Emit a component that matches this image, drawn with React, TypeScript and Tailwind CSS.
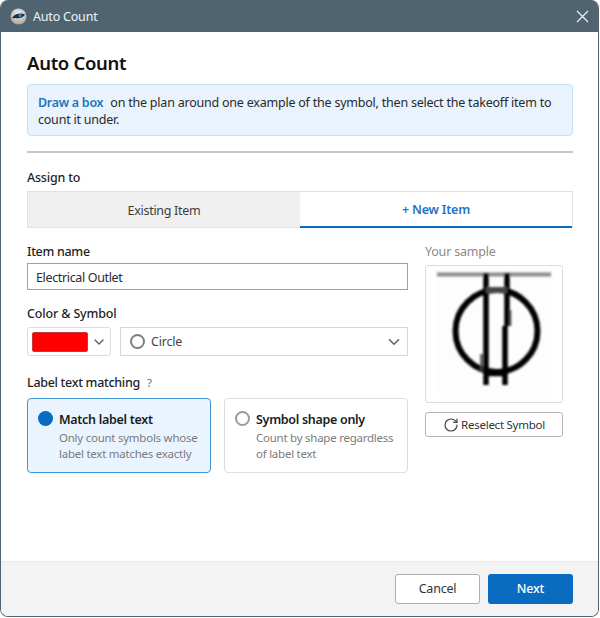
import { ChevronDown, RotateCw } from "lucide-react";

const font = { fontFamily: '"Noto Sans", sans-serif' };

function AppLogo() {
  return (
    <svg width="17" height="17" viewBox="0 0 17 17">
      <defs>
        <radialGradient id="logo-bg" cx="50%" cy="35%" r="65%">
          <stop offset="0%" stopColor="#f4f4f2" />
          <stop offset="100%" stopColor="#a9a59c" />
        </radialGradient>
      </defs>
      <circle cx="8.5" cy="8.5" r="8" fill="url(#logo-bg)" />
      <path d="M2 10 C5 5.5 10 4.5 15 6.5 C13.5 9.5 9 11 5.5 10 C4.500 10 3 10.500 2 10 Z" fill="#1d2f3f" />
      <circle cx="10" cy="7.500" r="1.700" fill="#2f7fc0" />
    </svg>
  );
}

function SampleSymbol() {
  return (
    <svg width="136" height="136" viewBox="0 0 136 136">
      <defs>
        <filter id="soft" x="-10%" y="-10%" width="120%" height="120%">
          <feGaussianBlur stdDeviation="1.200" />
        </filter>
      </defs>
      <rect x="11" y="4" width="115" height="124" fill="#fdfdfd" />
      <g filter="url(#soft)" fill="none" stroke="#000">
        <path d="M11 8.500 H125" stroke="#8c8c8c" strokeWidth="4" />
        <circle cx="70.500" cy="65" r="41" strokeWidth="6" />
        <path d="M60 7 V119" strokeWidth="5.500" />
        <path d="M81 7 V60 M79 60 V119" strokeWidth="5.500" />
        <path d="M60 24 H81" stroke="#444" strokeWidth="6" />
        <path d="M60 108.500 H81" strokeWidth="3.500" />
        <path d="M55.500 88 V105" stroke="#444" strokeWidth="2.500" />
        <path d="M84 44 V60" stroke="#444" strokeWidth="2.500" />
      </g>
    </svg>
  );
}

function OptionCard({ active, title, lines }: { active?: boolean; title: string; lines: string[] }) {
  return (
    <div
      className={
        active
          ? "flex h-[75px] w-[184px] gap-[6px] rounded-[4px] border border-[#3f95d6] bg-[#eaf4fe] pl-[10px] pt-[11px]"
          : "flex h-[75px] w-[184px] gap-[6px] rounded-[4px] border border-[#dedede] bg-white pl-[10px] pt-[11px]"
      }
    >
      {active ? (
        <span className="mt-[1px] h-[15px] w-[15px] shrink-0 rounded-full bg-[#0a6cc0]" />
      ) : (
        <span className="mt-[1px] h-[15px] w-[15px] shrink-0 rounded-full border-2 border-[#9b9b9b] bg-white" />
      )}
      <div>
        <div className="mt-[1px] text-[12.500px] leading-[17px] font-semibold tracking-[-0.3px] text-[#1c1c1c]">{title}</div>
        <div className="mt-[2px] text-[11.500px] leading-[16px] tracking-[-0.25px] whitespace-nowrap text-[#7b7b7b]">
          {lines.map((line) => (
            <div key={line}>{line}</div>
          ))}
        </div>
      </div>
    </div>
  );
}

export default function App() {
  return (
    <div className="h-[618px] w-[600px] bg-white" style={font}>
      <div className="flex h-[617px] w-[599px] flex-col overflow-hidden rounded-[8px] border-x border-b border-[#4f6370] bg-white">
        {/* title bar */}
        <div className="flex h-[32px] shrink-0 items-center justify-between bg-[#4f6370] pl-[9px] pr-[8px] text-white">
          <div className="flex items-center gap-[6px]">
            <AppLogo />
            <span className="pt-[2px] text-[12.500px] tracking-[-0.2px] text-[#f0f3f5]">Auto Count</span>
          </div>
          <svg width="13" height="13" viewBox="0 0 13 13" className="mr-[1px]">
            <path d="M1 1 L12 12 M12 1 L1 12" stroke="#f2f4f5" strokeWidth="1.100" fill="none" />
          </svg>
        </div>

        <div className="flex flex-1 flex-col pl-[26px] pr-[25px]">
          <h1 className="mt-[17px] text-[18.500px] leading-[28px] font-semibold tracking-[-0.3px] text-[#111]">Auto Count</h1>

          <div className="mt-[7px] h-[52px] rounded-[4px] border border-[#c3e0f7] bg-[#e8f3fd] pl-[10px] pt-[9px] text-[12.500px] leading-[17px] tracking-[-0.22px] whitespace-nowrap text-[#2a2a2a]">
            <div>
              <span className="font-semibold tracking-[-0.28px] text-[#1f74bd]">Draw a box</span>
              <span className="ml-[7px]">on the plan around one example of the symbol, then select the takeoff item to</span>
            </div>
            <div>count it under.</div>
          </div>

          <div className="mt-[15px] h-[2px] bg-[#c6c6c6]" />

          <div className="mt-[16px] text-[12.500px] leading-[17px] font-medium tracking-[-0.2px] text-[#1f1f1f]">Assign to</div>

          <div className="mt-[5px] flex h-[37px] border-x border-t border-[#e2e2e2]">
            <div className="flex w-[272px] items-center justify-center border-b border-[#e2e2e2] bg-[#f0f0f0] pt-[3px] text-[12.500px] tracking-[-0.3px] text-[#3c3c3c]">
              Existing Item
            </div>
            <div className="flex flex-1 items-center justify-center border-b-2 border-[#0a6cc0] bg-white pt-[3px] text-[12.500px] font-semibold tracking-[-0.2px] text-[#1f74c9]">
              + New Item
            </div>
          </div>

          <div className="flex">
            {/* left column */}
            <div className="w-[381px]">
              <div className="mt-[15px] text-[12.500px] leading-[17px] font-medium tracking-[-0.3px] text-[#1f1f1f]">Item name</div>
              <div className="mt-[3px] flex h-[27px] items-center border border-[#7aa7e0] bg-white pl-[8px] pt-[3px] text-[12.500px] tracking-[-0.35px] text-[#2a2a2a]">
                Electrical Outlet
              </div>

              <div className="mt-[15px] text-[12.500px] leading-[17px] font-medium tracking-[-0.15px] text-[#1f1f1f]">Color &amp; Symbol</div>
              <div className="mt-[5px] flex h-[29px] gap-[9px]">
                <div className="flex w-[84px] items-center rounded-[3px] border border-[#dcdcdc] bg-white pl-[4px]">
                  <span className="h-[20px] w-[56px] rounded-[2px] border border-[#c9383a] bg-[#ff0000]" />
                  <ChevronDown className="ml-[3px] h-[16px] w-[16px] text-[#666]" strokeWidth={2.200} />
                </div>
                <div className="flex flex-1 items-center border border-[#d6d6d6] bg-white pl-[9px] pr-[4px]">
                  <span className="h-[15px] w-[15px] rounded-full border-2 border-[#7f7f7f]" />
                  <span className="ml-[6px] flex-1 pt-[2px] text-[12.500px] tracking-[-0.2px] text-[#444]">Circle</span>
                  <ChevronDown className="h-[18px] w-[18px] text-[#666]" strokeWidth={2.200} />
                </div>
              </div>

              <div className="mt-[18px] flex items-center text-[12.500px] leading-[17px] font-medium tracking-[-0.3px] text-[#1f1f1f]">
                Label text matching
                <span className="ml-[7px] text-[11px] text-[#777]">?</span>
              </div>
              <div className="mt-[7px] flex gap-[13px]">
                <OptionCard active title="Match label text" lines={["Only count symbols whose", "label text matches exactly"]} />
                <OptionCard title="Symbol shape only" lines={["Count by shape regardless", "of label text"]} />
              </div>
            </div>

            {/* sample column */}
            <div className="ml-[17px] w-[138px]">
              <div className="mt-[15px] text-[12.500px] leading-[17px] tracking-[-0.2px] text-[#8a8a8a]">Your sample</div>
              <div className="mt-[5px] h-[138px] rounded-[3px] border border-[#dcdcdc] bg-white">
                <SampleSymbol />
              </div>
              <button className="mt-[9px] flex h-[25px] w-[138px] items-center justify-center gap-[2px] rounded-[3px] border border-[#b5b5b5] bg-white text-[11.500px] tracking-[-0.25px] text-[#333]">
                <RotateCw className="h-[16px] w-[16px] text-[#444]" strokeWidth={1.800} />
                Reselect Symbol
              </button>
            </div>
          </div>
        </div>

        {/* footer */}
        <div className="flex h-[55px] shrink-0 items-start justify-end gap-[8px] border-t border-[#e8e8e8] bg-[#f3f3f3] pr-[25px] pt-[12px]">
          <button className="h-[30px] w-[85px] rounded-[3px] border border-[#b0b0b0] bg-white text-[12.500px] tracking-[-0.2px] text-[#333]">Cancel</button>
          <button className="h-[30px] w-[85px] rounded-[3px] bg-[#0a6cc0] text-[12.500px] font-medium tracking-[-0.2px] text-white">Next</button>
        </div>
      </div>
    </div>
  );
}
